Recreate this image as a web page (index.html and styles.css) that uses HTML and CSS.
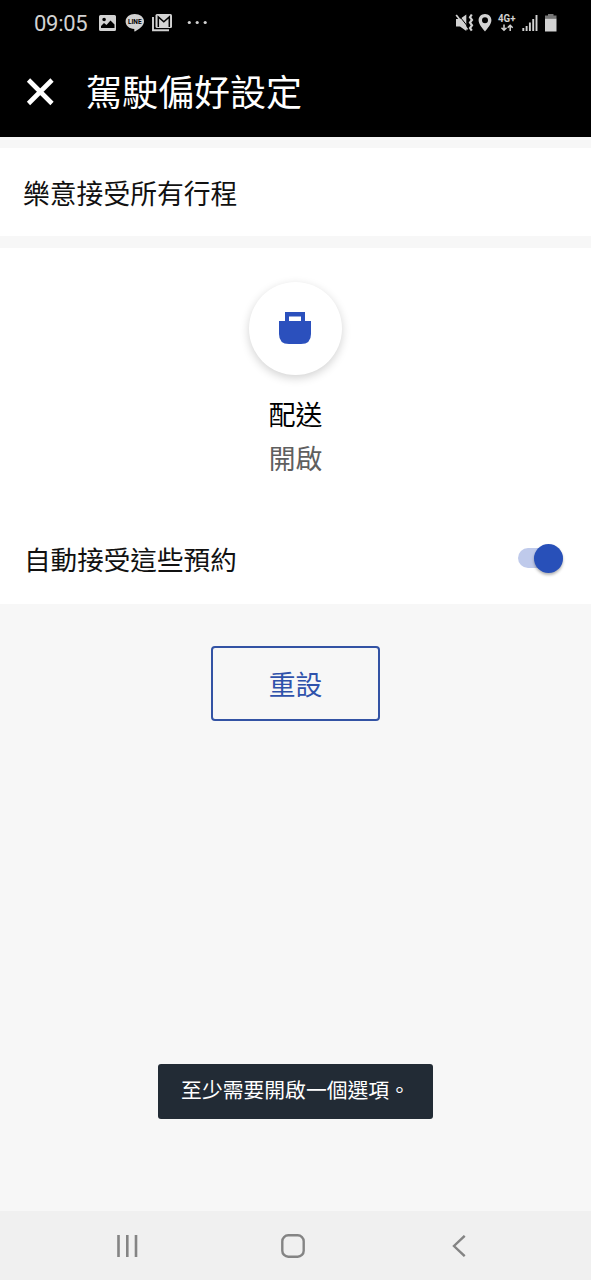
FILE: index.html
```html
<!DOCTYPE html>
<html lang="zh-Hant">
<head>
<meta charset="utf-8">
<title>駕駛偏好設定</title>
<link rel="stylesheet" href="styles.css">
</head>
<body>
<div class="screen">
  <div class="status">
    <span class="clock">09:05</span>
    <svg class="status-left" width="112" height="24" viewBox="98 10 112 24">
      <path fill="#d2d2d2" fill-rule="evenodd" d="M100.500 15H114.500Q116 15 116 16.500V29.500Q116 31 114.500 31H100.500Q99 31 99 29.500V16.500Q99 15 100.500 15ZM101 28H114.500V24.500L110.500 20.500L106.500 25L104 23L101 26ZM102.300 19.500A1.800 1.800 0 1 0 105.900 19.500A1.800 1.800 0 1 0 102.300 19.500Z"/>
      <path fill="#d2d2d2" d="M134.700 14C139.900 14 144 17.200 144 21.400C144 25.800 139 28.800 135 31.500C134 32 134.400 30.500 134.300 29C129.300 28.700 125.600 25.500 125.600 21.400C125.600 17.200 129.600 14 134.700 14Z"/>
      <text class="line-mark" x="134.800" y="24" text-anchor="middle">LINE</text>
      <path fill="none" stroke="#d2d2d2" stroke-width="1.900" d="M153 17V30.200H169"/>
      <rect x="155.500" y="14" width="16.500" height="14" rx="1.500" fill="#d2d2d2"/>
      <path fill="none" stroke="#000" stroke-width="1.500" d="M158.300 27V17L163.800 21.800L169.300 17V27"/>
      <circle cx="189.300" cy="22.500" r="1.600" fill="#d2d2d2"/>
      <circle cx="197.200" cy="22.500" r="1.600" fill="#d2d2d2"/>
      <circle cx="205.200" cy="22.500" r="1.600" fill="#d2d2d2"/>
    </svg>
    <svg class="status-right" width="104" height="24" viewBox="455 10 104 24">
      <g fill="none" stroke="#d2d2d2">
        <path fill="#d2d2d2" stroke="none" d="M456 19H460L466.300 14.500V31L460 26.500H456Z"/>
        <path stroke="#000" stroke-width="1" d="M458 14.300L468.500 27.500"/>
        <path stroke-width="1.700" d="M456.200 15L467.500 29.500"/>
        <path stroke-width="2.200" d="M471.800 14.500L470 17.200L472 19.900L470 22.600L472 25.300L470 28L471.800 30.700"/>
      </g>
      <path fill="#d2d2d2" fill-rule="evenodd" d="M485 14C488.800 14 491.400 16.800 491.400 20.300C491.400 24.500 487.500 28.300 485 31.500C482.500 28.300 478.600 24.500 478.600 20.300C478.600 16.800 481.200 14 485 14ZM485 17.300A3 3 0 1 0 485 23.300A3 3 0 1 0 485 17.300Z"/>
      <text class="network" x="498" y="22" textLength="17.500" lengthAdjust="spacingAndGlyphs">4G+</text>
      <path fill="none" stroke="#d2d2d2" stroke-width="1.500" d="M504 24.500V30M501.500 27.800L504 30.300L506.500 27.800M510.200 31V25.500M507.700 27.700L510.200 25.200L512.700 27.700"/>
      <path fill="none" stroke="#d2d2d2" stroke-width="1.900" d="M523.300 28V31M526.600 26V31M529.900 22.500V31M533.200 19V31M536.500 15V31"/>
      <path fill="#777" d="M548 14H553.500V15.500H556.500V18.500H545V15.500H548Z"/>
      <path fill="#d2d2d2" d="M545 18.500H556.500V31.500H545Z"/>
    </svg>
  </div>
  <header class="header">
    <svg class="close" width="28" height="28" viewBox="0 0 28 28"><path fill="none" stroke="#fff" stroke-width="4.600" d="M2.500 2L26 25.500M26 2L2.500 25.500"/></svg>
    <h1 class="title">駕駛偏好設定</h1>
  </header>
  <main class="content">
    <section class="row">樂意接受所有行程</section>
    <section class="panel">
      <div class="option">
        <div class="disc">
          <svg width="32" height="32" viewBox="0 0 32 32"><path fill="#2b50bd" fill-rule="evenodd" d="M6 0H26V9H32V22Q32 32 22 32H10Q0 32 0 22V9H6ZM10 4.500V9H22V4.500Z"/></svg>
        </div>
        <div class="name">配送</div>
        <div class="state">開啟</div>
      </div>
      <div class="toggle-row">
        <span>自動接受這些預約</span>
        <span class="switch"><span class="knob"></span></span>
      </div>
    </section>
    <button class="reset">重設</button>
    <div class="toast">至少需要開啟一個選項。</div>
  </main>
  <nav class="nav">
    <svg width="22" height="22" viewBox="0 0 22 22"><path fill="none" stroke="#848484" stroke-width="2.600" d="M1.500 0V22M10.300 0V22M19 0V22"/></svg>
    <svg class="home" width="24" height="24" viewBox="0 0 24 24"><rect x="1.300" y="1.300" width="21.400" height="21.400" rx="6" fill="none" stroke="#848484" stroke-width="2.400"/></svg>
    <svg width="14" height="22" viewBox="0 0 14 22"><path fill="none" stroke="#848484" stroke-width="2.400" d="M12.700 0.800L2 11L12.700 21.200"/></svg>
  </nav>
</div>
</body>
</html>
```
FILE: styles.css
```css
* { box-sizing: border-box; }
body {
  margin: 0;
  background: #f7f7f7;
  font-family: "Noto Sans CJK TC", sans-serif;
  font-weight: 400;
}
.screen {
  width: 591px;
  height: 1280px;
  display: flex;
  flex-direction: column;
  overflow: hidden;
}
.status {
  height: 46px;
  flex: none;
  display: flex;
  align-items: flex-start;
  padding: 10px 32px 0 34px;
  background: #000;
  color: #d2d2d2;
}
.clock {
  width: 64px;
  font: 22px/28px Roboto, sans-serif;
  letter-spacing: -0.3px;
}
.status-right { margin-left: auto; }
.line-mark { font: 700 6.5px Roboto, sans-serif; fill: #000; }
.network { font: 700 10px Roboto, sans-serif; fill: #d2d2d2; }
.header {
  height: 91px;
  flex: none;
  display: flex;
  align-items: center;
  gap: 32px;
  padding-left: 26px;
  background: #000;
  color: #fff;
}
.close { display: block; }
.title {
  margin: 0;
  font-size: 36px;
  line-height: 52px;
  font-weight: 400;
  padding-bottom: 4px;
}
.content {
  flex: 1;
  display: flex;
  flex-direction: column;
  align-items: center;
  padding-top: 11px;
}
.row {
  width: 100%;
  height: 88px;
  padding-left: 23px;
  background: #fff;
  color: #111;
  font-size: 26.8px;
  line-height: 89px;
}
.panel {
  width: 100%;
  height: 356px;
  margin-top: 12px;
  padding-top: 34px;
  background: #fff;
}
.option {
  display: flex;
  flex-direction: column;
  align-items: center;
  font-size: 26.8px;
  line-height: 44px;
}
.disc {
  width: 93px;
  height: 93px;
  display: flex;
  align-items: center;
  justify-content: center;
  padding: 0 1px 1px 0;
  border-radius: 50%;
  background: #fff;
  box-shadow: 0 3px 10px rgba(0, 0, 0, 0.18);
}
.name { margin-top: 17px; color: #000; }
.state { color: #5f5f5f; }
.toggle-row {
  display: flex;
  align-items: center;
  justify-content: space-between;
  height: 60px;
  margin-top: 48px;
  padding: 0 28px 0 24px;
  color: #111;
  font-size: 26.6px;
}
.switch {
  width: 45px;
  height: 20px;
  display: flex;
  align-items: center;
  justify-content: flex-end;
  border-radius: 10px;
  background: #bfcaeb;
}
.knob {
  width: 29px;
  height: 29px;
  flex: none;
  border-radius: 50%;
  background: #2850b9;
  box-shadow: 0 2px 3px rgba(0, 0, 0, 0.3);
}
.reset {
  width: 169px;
  height: 75px;
  margin: 42px 0 0;
  padding: 0;
  border: 2px solid #3353a4;
  border-radius: 4px;
  background: transparent;
  color: #2f52ab;
  font: 26.8px/70px "Noto Sans CJK TC", sans-serif;
}
.toast {
  height: 55px;
  margin: auto 0 92px;
  padding: 0 23px;
  border-radius: 3px;
  background: #222b35;
  color: #fff;
  font-size: 20.8px;
  line-height: 50px;
  white-space: nowrap;
}
.nav {
  height: 69px;
  flex: none;
  display: flex;
  align-items: center;
  justify-content: space-between;
  padding: 0 125px 0 117px;
  background: #f0f0f0;
}
.home { margin-right: 5px; }
```
